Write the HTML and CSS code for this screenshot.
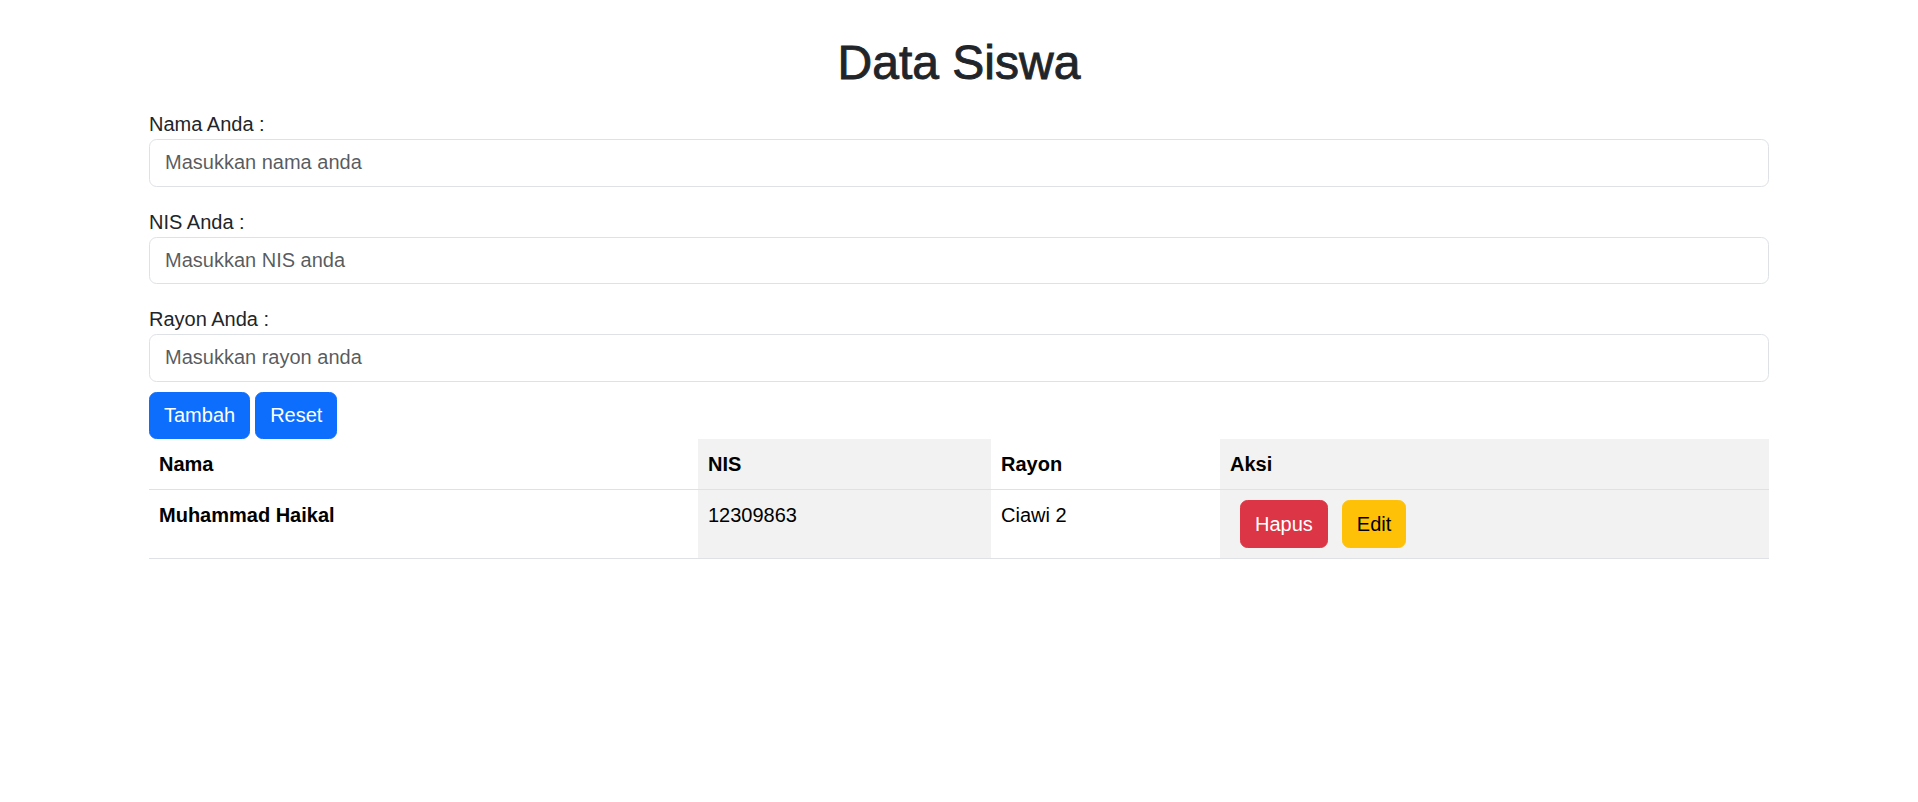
FILE: index.html
```html
<!DOCTYPE html>
<html lang="id">
<head>
<meta charset="utf-8">
<title>Data Siswa</title>
<link rel="stylesheet" href="styles.css">
</head>
<body>
<div class="container">
  <h1 class="title">Data Siswa</h1>
  <form class="form">
    <div class="field">
      <label class="label" for="nama">Nama Anda :</label>
      <input class="input" id="nama" type="text" placeholder="Masukkan nama anda">
    </div>
    <div class="field">
      <label class="label" for="nis">NIS Anda :</label>
      <input class="input" id="nis" type="text" placeholder="Masukkan NIS anda">
    </div>
    <div class="field">
      <label class="label" for="rayon">Rayon Anda :</label>
      <input class="input" id="rayon" type="text" placeholder="Masukkan rayon anda">
    </div>
    <div class="actions">
      <button type="button" class="btn btn-primary">Tambah</button>
      <button type="reset" class="btn btn-primary">Reset</button>
    </div>
  </form>
  <table class="table">
    <thead>
      <tr>
        <th class="col-nama">Nama</th>
        <th class="col-nis striped">NIS</th>
        <th class="col-rayon">Rayon</th>
        <th class="col-aksi striped">Aksi</th>
      </tr>
    </thead>
    <tbody>
      <tr>
        <th>Muhammad Haikal</th>
        <td class="striped">12309863</td>
        <td>Ciawi 2</td>
        <td class="striped">
          <div class="row-actions">
            <button type="button" class="btn btn-danger">Hapus</button>
            <button type="button" class="btn btn-warning">Edit</button>
          </div>
        </td>
      </tr>
    </tbody>
  </table>
</div>
</body>
</html>
```
FILE: styles.css
```css
* { box-sizing: border-box; }

html, body {
  margin: 0;
  padding: 0;
  background: #fff;
}

body {
  font-family: "Liberation Sans", Arial, sans-serif;
  font-size: 20px;
  line-height: 1.5;
  color: #212529;
}

.container {
  width: 1650px;
  margin: 0 auto;
  padding: 33px 15px 0;
}

.title {
  margin: 0 0 16px;
  font-size: 48px;
  font-weight: 500;
  line-height: 60px;
  text-align: center;
  color: #212529;
  -webkit-text-stroke: 0.9px #212529;
}

.form {
  display: flex;
  flex-direction: column;
}

.field {
  display: flex;
  flex-direction: column;
}

.field + .field {
  margin-top: 20px;
}

.label {
  display: block;
  margin: 0;
  line-height: 30px;
}

.input {
  display: block;
  width: 100%;
  height: 47.5px;
  padding: 7.5px 15px;
  font-family: inherit;
  font-size: 20px;
  line-height: 30px;
  color: #212529;
  background: #fff;
  border: 1.25px solid #dee2e6;
  border-radius: 7.5px;
  outline: none;
}

.input::placeholder {
  color: rgba(33, 37, 41, 0.75);
}

.actions {
  display: flex;
  gap: 5px;
  margin-top: 10px;
}

.btn {
  display: inline-block;
  height: 47.5px;
  padding: 7.5px 14px;
  font-family: inherit;
  font-size: 20px;
  line-height: 30px;
  border: 1.25px solid transparent;
  border-radius: 7.5px;
  cursor: pointer;
}

.btn-primary {
  background: #0d6efd;
  border-color: #0d6efd;
  color: #fff;
}

.btn-danger {
  background: #dc3545;
  border-color: #dc3545;
  color: #fff;
}

.btn-warning {
  background: #ffc107;
  border-color: #ffc107;
  color: #000;
}

.table {
  width: 100%;
  border-collapse: collapse;
  color: #000;
  margin-bottom: 20px;
}

.table th,
.table td {
  padding: 10px;
  text-align: left;
  vertical-align: top;
  line-height: 30px;
  border-bottom: 1.25px solid #dee2e6;
}

.table th { font-weight: 700; }
.table td { font-weight: 400; }

.striped { background: #f2f2f2; }

.col-nama { width: 549px; }
.col-nis { width: 293px; }
.col-rayon { width: 229px; }

.row-actions {
  display: flex;
  gap: 14px;
  padding-left: 10px;
}
```
